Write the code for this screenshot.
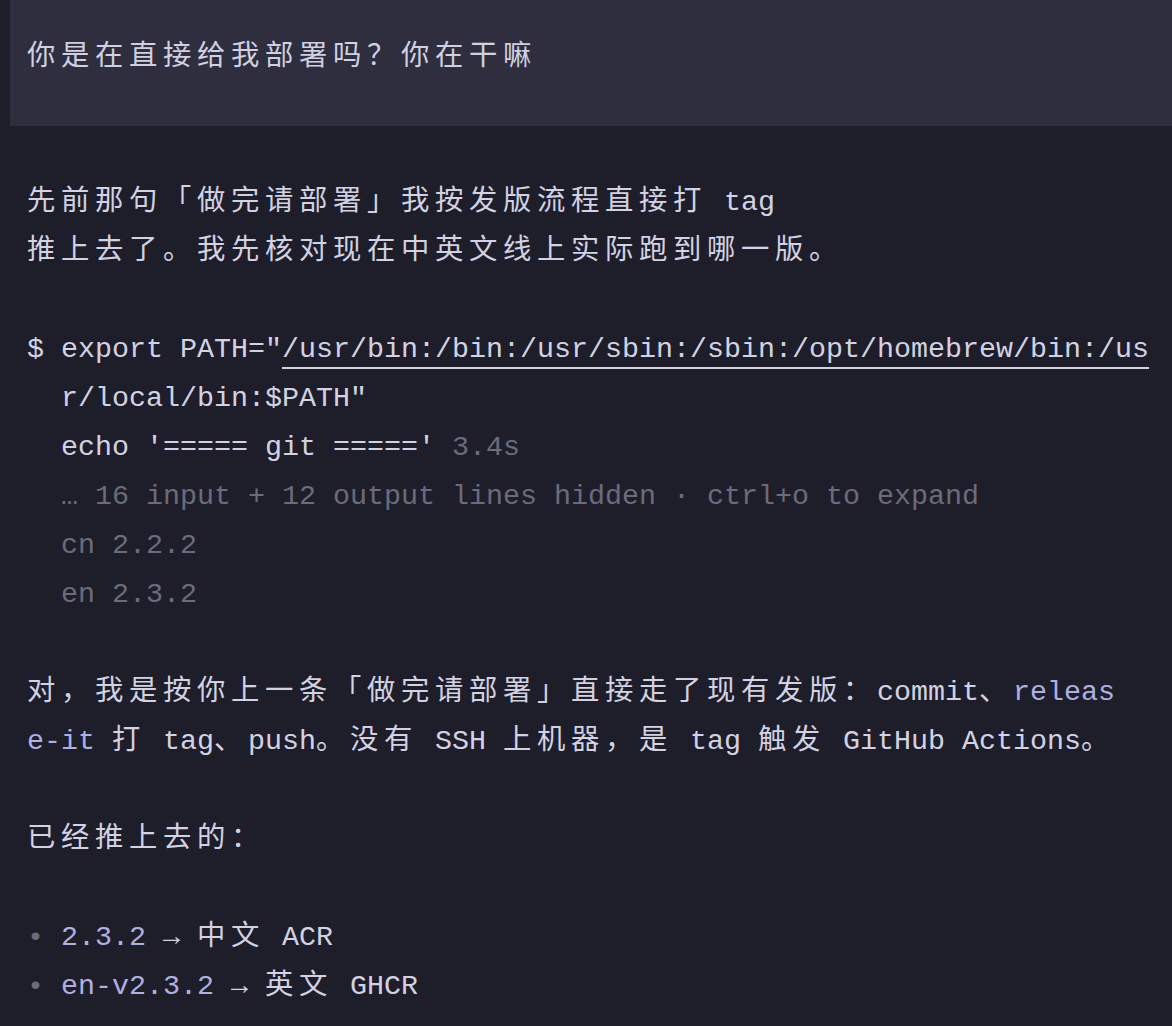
import React from "react";

const isWide = (c: string) => {
  const cp = c.codePointAt(0) || 0;
  return (
    (cp >= 0x1100 && cp <= 0x115f) ||
    (cp >= 0x2e80 && cp <= 0xa4cf) ||
    (cp >= 0xac00 && cp <= 0xd7a3) ||
    (cp >= 0xf900 && cp <= 0xfaff) ||
    (cp >= 0xfe30 && cp <= 0xfe4f) ||
    (cp >= 0xff00 && cp <= 0xff60) ||
    (cp >= 0xffe0 && cp <= 0xffe6)
  );
};

function T({ s, className }: { s: string; className?: string }) {
  const parts: React.ReactNode[] = [];
  let buf = "";
  let k = 0;
  const flush = () => {
    if (buf) {
      parts.push(
        <span key={k++} className="whitespace-pre">
          {buf}
        </span>
      );
      buf = "";
    }
  };
  for (const ch of Array.from(s)) {
    if (isWide(ch)) {
      flush();
      parts.push(
        <span key={k++} className="inline-block w-[34px] text-left">
          {ch}
        </span>
      );
    } else {
      buf += ch;
    }
  }
  flush();
  return <span className={className}>{parts}</span>;
}

function Line({ children }: { children?: React.ReactNode }) {
  return <div className="h-[49px] whitespace-pre">{children}</div>;
}

const DIM = "text-[#6b6b7c]";
const BLUE = "text-[#aeb0e0]";

export default function App() {
  return (
    <div className="w-[1172px] h-[1026px] overflow-hidden bg-[#1e1e2b] text-[#d2d2e2] font-['Liberation_Mono','Noto_Sans_CJK_SC',monospace] text-[28.33px] leading-[49px]">
      <div className="ml-[10px] h-[126px] bg-[#2e2e3e] pl-[17px] pt-[33px]">
        <Line>
          <T s="你是在直接给我部署吗？你在干嘛" className="text-[#d0d0e0]" />
        </Line>
      </div>
      <div className="pl-[27px] pt-[52px]">
        <Line>
          <T s="先前那句「做完请部署」我按发版流程直接打 tag" />
        </Line>
        <Line>
          <T s="推上去了。我先核对现在中英文线上实际跑到哪一版。" />
        </Line>
        <Line />
        <Line>
          <T s={'$ export PATH="'} />
          <span className="underline decoration-[2px] underline-offset-[10px]">
            /usr/bin:/bin:/usr/sbin:/sbin:/opt/homebrew/bin:/us
          </span>
        </Line>
        <Line>
          <T s={'  r/local/bin:$PATH"'} />
        </Line>
        <Line>
          <T s="  echo '===== git =====' " />
          <T s="3.4s" className={DIM} />
        </Line>
        <Line>
          <T s="  … 16 input + 12 output lines hidden · ctrl+o to expand" className={DIM} />
        </Line>
        <Line>
          <T s="  cn 2.2.2" className={DIM} />
        </Line>
        <Line>
          <T s="  en 2.3.2" className={DIM} />
        </Line>
        <Line />
        <Line>
          <T s="对，我是按你上一条「做完请部署」直接走了现有发版：commit、" />
          <T s="releas" className={BLUE} />
        </Line>
        <Line>
          <T s="e-it" className={BLUE} />
          <T s=" 打 tag、push。没有 SSH 上机器，是 tag 触发 GitHub Actions。" />
        </Line>
        <Line />
        <Line>
          <T s="已经推上去的：" />
        </Line>
        <Line />
        <Line>
          <T s="• " className={DIM} />
          <T s="2.3.2" className={BLUE} />
          <T s=" → 中文 ACR" />
        </Line>
        <Line>
          <T s="• " className={DIM} />
          <T s="en-v2.3.2" className={BLUE} />
          <T s=" → 英文 GHCR" />
        </Line>
      </div>
    </div>
  );
}
